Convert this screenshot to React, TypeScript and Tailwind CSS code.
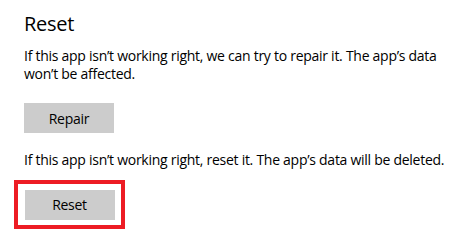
export default function App() {
  return (
    <div className="w-[467px] h-[242px] bg-white pl-6 pt-[10px] text-black font-['Open_Sans',sans-serif] tracking-[-0.27px]">
      <h2 className="text-[20px] leading-[28px]">Reset</h2>
      <p className="mt-[9px] w-[430px] text-[14px] leading-[18px]">
        If this app isn’t working right, we can try to repair it. The app’s data won’t be affected.
      </p>
      <button className="mt-[20px] w-[90px] h-[30px] bg-[#cccccc] text-[14px]">Repair</button>
      <p className="mt-[18px] text-[14px] leading-[18px]">
        If this app isn’t working right, reset it. The app’s data will be deleted.
      </p>
      <div className="mt-[11px] -ml-[10px] w-[111px] h-[49px] border-[4px] border-[#ed1c24] flex items-center justify-center">
        <button className="w-[90px] h-[30px] bg-[#cccccc] text-[14px]">Reset</button>
      </div>
    </div>
  );
}
